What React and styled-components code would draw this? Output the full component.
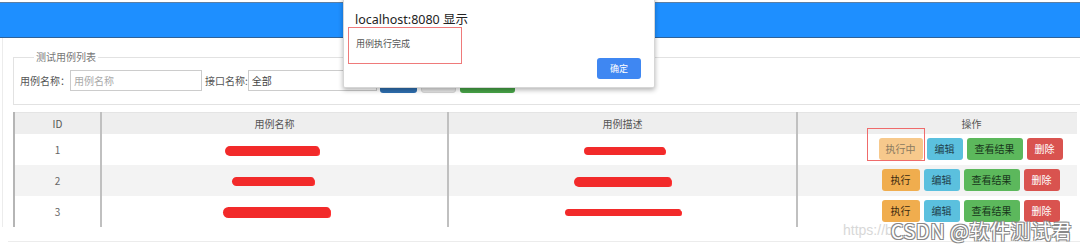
import React from "react";
import styled, { createGlobalStyle, css } from "styled-components";

const GlobalStyle = createGlobalStyle`
  html, body {
    margin: 0;
    padding: 0;
    background: #fff;
  }
  body {
    font-family: "Noto Sans CJK SC", "Noto Sans", "Liberation Sans", sans-serif;
    font-size: 10px;
    color: #555;
  }
  * {
    box-sizing: border-box;
  }
`;

const Page = styled.div`
  position: relative;
  width: 1080px;
  height: 246px;
  overflow: hidden;
`;

const TopBar = styled.div`
  margin-top: 2px;
  height: 36px;
  background: #1e8fff;
  border-top: 1px solid #5d7fa3;
  border-bottom: 1px solid #2f6298;
`;

const Panel = styled.div`
  margin-left: 2px;
  padding: 12px 0 0 10px;
  border-left: 1px solid #ececec;
`;

const Fieldset = styled.fieldset`
  margin: 0;
  padding: 6px 8px 11px 6px;
  border: 1px solid #e2e2e2;
  border-right: none;
  min-width: 0;
`;

const Legend = styled.legend`
  margin-left: 14px;
  padding: 0 2px;
  font-size: 10px;
  line-height: 14px;
  color: #777;
`;

const FormRow = styled.div`
  display: flex;
  align-items: flex-start;
`;

const Label = styled.span`
  font-size: 10px;
  line-height: 21px;
  color: #555;
  margin-right: ${(p) => p.$gap || 0}px;
`;

const Input = styled.input`
  width: ${(p) => p.$w}px;
  height: 21px;
  padding: 0 3px;
  border: 1px solid #ccc;
  font: inherit;
  font-size: 10px;
  color: #444;
  margin-right: 3px;
  &::placeholder {
    color: #aaa;
  }
`;

const FormButton = styled.div`
  width: ${(p) => p.$w}px;
  height: 23px;
  border-radius: 3px;
  margin-right: 4px;
  ${(p) =>
    p.$kind === "blue" &&
    css`
      background: #2e6fb0;
    `}
  ${(p) =>
    p.$kind === "plain" &&
    css`
      background: #e6e6e6;
      border: 1px solid #d5d5d5;
    `}
  ${(p) =>
    p.$kind === "green" &&
    css`
      background: #47a447;
    `}
`;

const Table = styled.table`
  margin-top: 7px;
  width: 1064px;
  border-collapse: collapse;
  table-layout: fixed;
  border-left: 2px solid #b5b5b5;
`;

const Th = styled.th`
  height: 21px;
  padding: 0 0 0 ${(p) => p.$indent || 0}px;
  background: #eee;
  border-top: 1px solid #e4e4e4;
  border-left: 2px solid #c0c0c0;
  font-weight: normal;
  font-size: 10px;
  color: #555;
  text-align: center;
  &:first-child {
    border-left: none;
  }
`;

const Tr = styled.tr`
  background: ${(p) => (p.$alt ? "#f3f3f3" : "#fff")};
`;

const Td = styled.td`
  height: 31px;
  padding: 0;
  border-left: 2px solid #c0c0c0;
  text-align: center;
  font-size: 10px;
  color: #666;
  &:first-child {
    border-left: none;
  }
`;

const OpsCell = styled(Td)`
  padding-left: 66px;
`;

const Scribble = styled.span`
  display: inline-block;
  vertical-align: middle;
  width: ${(p) => p.$w}px;
  height: ${(p) => p.$h || 9}px;
  margin-left: ${(p) => p.$shift || 0}px;
  background: #f22a2a;
  border-radius: 6px 4px 5px 6px;
  box-shadow: 2px 1px 0 -1px #f33;
`;

const Ops = styled.div`
  display: flex;
  justify-content: center;
  gap: 4px;
`;

const Mark = styled.div`
  position: relative;
  display: flex;
`;

const MarkBox = styled.div`
  position: absolute;
  left: -12px;
  top: -10px;
  right: -2px;
  bottom: -1px;
  border: 1px solid #ef6b6b;
`;

const tones = {
  run: css`
    background: #f0ad4e;
    color: #3a2a10;
  `,
  running: css`
    background: #f7c98c;
    color: #8a7a60;
  `,
  edit: css`
    background: #5bc0de;
    color: #1f3e4a;
  `,
  result: css`
    background: #5cb85c;
    color: #17351a;
  `,
  del: css`
    background: #d9534f;
    color: #fff;
  `,
};

const OpButton = styled.button`
  height: 22px;
  padding: 0 ${(p) => p.$pad || 8}px;
  border: none;
  border-radius: 3px;
  font: inherit;
  font-size: 10px;
  line-height: 22px;
  ${(p) => tones[p.$tone]}
`;

const FooterLine = styled.div`
  margin: 14px 0 0 8px;
  border-top: 1px solid #ececec;
`;

const Dialog = styled.div`
  position: absolute;
  left: 343px;
  top: -4px;
  width: 312px;
  height: 92px;
  background: #fff;
  border: 1px solid #d6d6d6;
  border-radius: 2px;
  box-shadow: 0 2px 5px rgba(0, 0, 0, 0.3);
`;

const DialogTitle = styled.div`
  margin: 14px 0 0 11px;
  font-family: "Noto Sans", "Noto Sans CJK SC", sans-serif;
  font-size: 12.5px;
  line-height: 17px;
  color: #222;
`;

const DialogBody = styled.div`
  display: flex;
  justify-content: space-between;
  align-items: flex-start;
  padding: 0 13px 0 4px;
`;

const Message = styled.div`
  width: 114px;
  height: 37px;
  margin-top: -1px;
  padding: 10px 0 0 7px;
  border: 1px solid #ef7a7a;
  font-size: 9px;
  line-height: 12px;
  color: #555;
`;

const OkButton = styled.button`
  margin-top: 30px;
  width: 44px;
  height: 21px;
  border: none;
  border-radius: 3px;
  background: #3f87f2;
  color: #fff;
  font: inherit;
  font-size: 9px;
`;

const Watermark = styled.div`
  position: absolute;
  right: 8px;
  bottom: 3px;
  font-size: 20px;
  line-height: 24px;
  color: #fff;
  letter-spacing: 0.5px;
  text-shadow: -1px -1px 0 #888, 1px -1px 0 #888, -1px 1px 0 #888, 1px 1px 0 #888;
  white-space: nowrap;
`;

const WatermarkUrl = styled.div`
  position: absolute;
  left: 843px;
  bottom: 8px;
  font-family: "Liberation Sans", sans-serif;
  font-size: 14px;
  color: #d8d8d8;
  white-space: nowrap;
`;

const rows = [
  { id: 1, name: { w: 94, h: 10, s: -5 }, desc: { w: 81, h: 8, s: 4 }, running: true },
  { id: 2, name: { w: 82, h: 9, s: -3 }, desc: { w: 97, h: 10, s: 0 } },
  { id: 3, name: { w: 107, h: 11, s: 4 }, desc: { w: 116, h: 7, s: 0 } },
];

export default function App() {
  return (
    <>
      <GlobalStyle />
      <Page>
        <TopBar />
        <Panel>
          <Fieldset>
            <Legend>测试用例列表</Legend>
            <FormRow>
              <Label>用例名称：</Label>
              <Input $w={132} placeholder="用例名称" />
              <Label $gap={0}>接口名称:</Label>
              <Input $w={129} defaultValue="全部" />
              <FormButton $kind="blue" $w={37} />
              <FormButton $kind="plain" $w={35} />
              <FormButton $kind="green" $w={55} />
            </FormRow>
          </Fieldset>
          <Table>
            <colgroup>
              <col style={{ width: 87 }} />
              <col style={{ width: 347 }} />
              <col style={{ width: 349 }} />
              <col />
            </colgroup>
            <thead>
              <tr>
                <Th>ID</Th>
                <Th>用例名称</Th>
                <Th>用例描述</Th>
                <Th $indent={68}>操作</Th>
              </tr>
            </thead>
            <tbody>
              {rows.map((r, i) => (
                <Tr key={r.id} $alt={i === 1}>
                  <Td>{r.id}</Td>
                  <Td>
                    <Scribble $w={r.name.w} $h={r.name.h} $shift={r.name.s} />
                  </Td>
                  <Td>
                    <Scribble $w={r.desc.w} $h={r.desc.h} $shift={r.desc.s} />
                  </Td>
                  <OpsCell>
                    <Ops>
                      {r.running ? (
                        <Mark>
                          <MarkBox />
                          <OpButton $tone="running" $pad={7}>
                            执行中
                          </OpButton>
                        </Mark>
                      ) : (
                        <OpButton $tone="run" $pad={9}>执行</OpButton>
                      )}
                      <OpButton $tone="edit">编辑</OpButton>
                      <OpButton $tone="result">查看结果</OpButton>
                      <OpButton $tone="del">删除</OpButton>
                    </Ops>
                  </OpsCell>
                </Tr>
              ))}
            </tbody>
          </Table>
        </Panel>
        <FooterLine />
        <Dialog>
          <DialogTitle>localhost:8080 显示</DialogTitle>
          <DialogBody>
            <Message>用例执行完成</Message>
            <OkButton>确定</OkButton>
          </DialogBody>
        </Dialog>
        <WatermarkUrl>https://b</WatermarkUrl>
        <Watermark>CSDN @软件测试君</Watermark>
      </Page>
    </>
  );
}
